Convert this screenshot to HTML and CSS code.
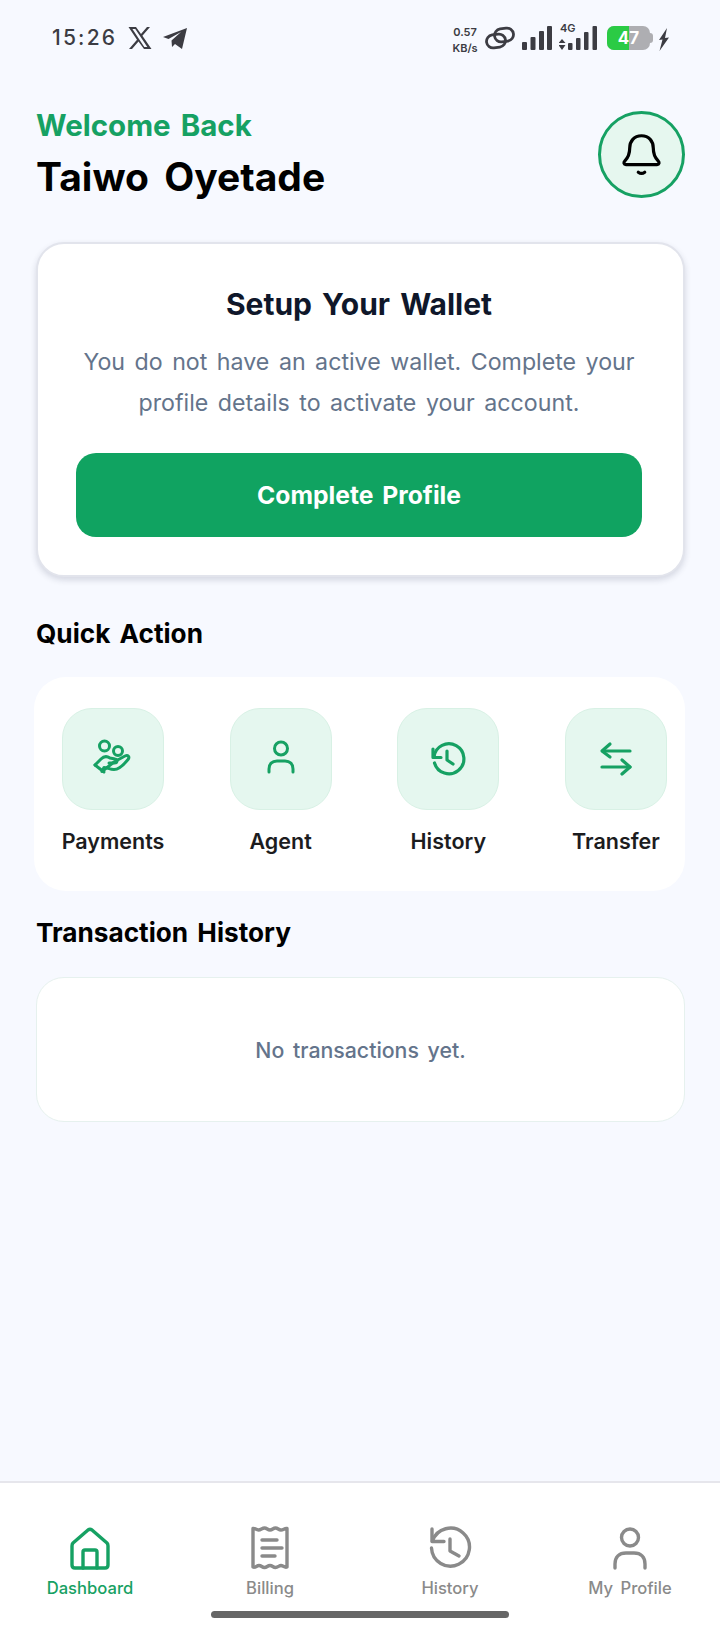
FILE: index.html
```html
<!DOCTYPE html>
<html lang="en">
<head>
    <meta charset="UTF-8">
    <meta name="viewport" content="width=device-width, initial-scale=1.0">
    <title>Dashboard</title>
    <link rel="stylesheet" href="styles.css">
</head>
<body>

<div class="screen">
    <!-- Status bar -->
    <div class="status-bar">
        <div class="status-left">
            <span class="time">15:26</span>
            <svg class="x-logo" width="24" height="24" viewBox="0 0 24 24"><path d="M.5 1h7.500l5 6.900L19 1h3l-7.600 8.700L23.500 23H16l-5.500-7.600L4 23H1l8-9.200z M4.400 3l11.900 18h3L7.300 3z" fill="#3c3c43" fill-rule="evenodd"/></svg>
            <svg class="tg-logo" width="26" height="24" viewBox="0 0 26 24"><path d="M25 2 20 23 13 18 10 21 9.500 14.500 19 6 6.500 13 1 11z" fill="#3c3c43"/></svg>
        </div>
        <div class="status-right">
            <div class="net-speed"><span>0.57</span><span>KB/s</span></div>
            <svg class="link-icon" width="30" height="24" viewBox="0 0 30 24" fill="none" stroke="#3c3c43" stroke-width="2.800"><rect x="1.500" y="8.500" width="19" height="13" rx="6.500" transform="rotate(-8 11 15)"/><rect x="9.500" y="2.500" width="19" height="13" rx="6.500" transform="rotate(-8 19 9)"/></svg>
            <svg class="signal" width="30" height="24" viewBox="0 0 30 24" fill="#3c3c43"><rect x="0" y="16" width="5" height="8" rx="1"/><rect x="8.500" y="11" width="5" height="13" rx="1"/><rect x="17" y="5" width="5" height="19" rx="1"/><rect x="25" y="0" width="5" height="24" rx="1"/></svg>
            <div class="signal-4g">
                <span class="tag-4g">4G</span>
                <svg width="39" height="24" viewBox="0 0 39 24" fill="#3c3c43"><path d="M3 13l3.500 4h-7zM3 24l-3.500-5h7z"/><rect x="9" y="17" width="4.500" height="7" rx="1"/><rect x="17" y="12" width="4.500" height="12" rx="1"/><rect x="25" y="6" width="4.500" height="18" rx="1"/><rect x="33.500" y="0" width="4.500" height="24" rx="1"/></svg>
            </div>
            <div class="battery">
                <div class="battery-body">
                    <div class="battery-level"></div>
                    <span class="battery-text">47</span>
                </div>
                <div class="battery-cap"></div>
            </div>
            <svg class="bolt" width="12" height="23" viewBox="0 0 12 23"><path d="M9 0 1 12l3.500-.5L1.500 23 11 9.500l-4 .5z" fill="#3c3c43"/></svg>
        </div>
    </div>

    <main class="content">
        <!-- Greeting -->
        <div class="greeting">
            <div>
                <div class="welcome">Welcome Back</div>
                <div class="user-name">Taiwo Oyetade</div>
            </div>
            <div class="bell-button">
                <svg width="45" height="45" viewBox="0 0 42 42" fill="none" stroke="#000" stroke-width="3" stroke-linecap="round" stroke-linejoin="round"><path d="M21 3.500c-7 0-11 5-11 11.500 0 5-1.500 9-4.500 12-1.500 1.500-1 3.500 1 3.500h29c2 0 2.500-2 1-3.500-3-3-4.500-7-4.500-12C32 8.500 28 3.500 21 3.500z"/><path d="M18 37.500c2 1.500 4 1.500 6 0"/></svg>
            </div>
        </div>

        <!-- Wallet setup -->
        <section class="wallet-card">
            <h2 class="wallet-title">Setup Your Wallet</h2>
            <p class="wallet-text">You do not have an active wallet. Complete your profile details to activate your account.</p>
            <div class="cta">Complete Profile</div>
        </section>

        <h3 class="section-title quick-title">Quick Action</h3>
        <section class="actions-card">
            <div class="action">
                <div class="action-icon">
                    <svg width="42" height="42" viewBox="0 0 42 42" fill="none" stroke="#16a163" stroke-width="3" stroke-linecap="round" stroke-linejoin="round"><circle cx="12.500" cy="8" r="5"/><circle cx="26" cy="13" r="4.500"/><path d="M3 27l6-6c3-3 6-3 9-1l5 1c3 .5 2.500 4-.5 4H17"/><path d="M22 24l11-6c3-1.500 5 1 3 3.500-4 5-9 10-14 10-4 0-7-2-10-2l-2 4z"/><path d="M3 27l9 7"/></svg>
                </div>
                <span class="action-label">Payments</span>
            </div>
            <div class="action">
                <div class="action-icon">
                    <svg width="42" height="42" viewBox="0 0 42 42" fill="none" stroke="#16a163" stroke-width="3" stroke-linecap="round" stroke-linejoin="round"><circle cx="21" cy="10.500" r="6.500"/><path d="M9 34v-3c0-5 3-8 8-8h8c5 0 8 3 8 8v3"/></svg>
                </div>
                <span class="action-label">Agent</span>
            </div>
            <div class="action">
                <div class="action-icon">
                    <svg width="42" height="42" viewBox="0 0 42 42" fill="none" stroke="#16a163" stroke-width="3.200" stroke-linecap="round" stroke-linejoin="round"><path d="M7 19A15 15 0 1 1 7.500 25"/><path d="M6 11v8.500h8"/><path d="M20 13v9l6 4"/></svg>
                </div>
                <span class="action-label">History</span>
            </div>
            <div class="action">
                <div class="action-icon">
                    <svg width="42" height="42" viewBox="0 0 42 42" fill="none" stroke="#16a163" stroke-width="3.200" stroke-linecap="round" stroke-linejoin="round"><path d="M35 13H8"/><path d="M15 6l-8 7 8 6"/><path d="M7 29h28"/><path d="M27 22l8 7-8 7"/></svg>
                </div>
                <span class="action-label">Transfer</span>
            </div>
        </section>

        <h3 class="section-title tx-title">Transaction History</h3>
        <section class="tx-card">No transactions yet.</section>
    </main>

    <!-- Bottom nav -->
    <nav class="bottom-nav">
        <div class="nav-items">
            <div class="nav-item active">
                <svg width="44" height="44" viewBox="0 0 44 44" fill="none" stroke="#16a163" stroke-width="3.400" stroke-linecap="round" stroke-linejoin="round"><path d="M5 17 20 4c1.500-1 2.500-1 4 0l15 13c.8.800 1 1.500 1 3v19c0 2-1 3-3 3H7c-2 0-3-1-3-3V20c0-1.500.2-2.200 1-3z"/><path d="M15 42V26c0-1.500.5-2 2-2h10c1.500 0 2 .500 2 2v16"/></svg>
                <span>Dashboard</span>
            </div>
            <div class="nav-item">
                <svg width="44" height="44" viewBox="0 0 44 44" fill="none" stroke="#8a8a8a" stroke-width="3.400" stroke-linecap="round" stroke-linejoin="round"><path d="M5 2.500c2-.5 3 1.500 5.500 1.500S14 2 16.500 2s3 2 5.500 2 3-2 5.500-2 3 2 5.500 2 3.500-2 6-1.500V41c-2.500 1-4-1.500-6-1.500s-3 2-5.500 2-3-2-5.500-2-3 2-5.500 2-3-2-5.500-2S7.500 42 5 41z"/><path d="M14 14h15M14 22h20M14 30h13"/></svg>
                <span>Billing</span>
            </div>
            <div class="nav-item">
                <svg width="44" height="44" viewBox="0 0 44 44" fill="none" stroke="#8a8a8a" stroke-width="3.400" stroke-linecap="round" stroke-linejoin="round"><path d="M4.500 15A19 19 0 1 1 3.500 22"/><path d="M4 3v12.500h12"/><path d="M22 13v12l9 5"/></svg>
                <span>History</span>
            </div>
            <div class="nav-item">
                <svg width="44" height="44" viewBox="0 0 44 44" fill="none" stroke="#8a8a8a" stroke-width="3.400" stroke-linecap="round" stroke-linejoin="round"><circle cx="22" cy="11.500" r="8.500"/><path d="M7 42v-4c0-7 4-11 11-11h8c7 0 11 4 11 11v4"/></svg>
                <span>My Profile</span>
            </div>
        </div>
        <div class="home-bar"></div>
    </nav>
</div>

</body>
</html>
```

FILE: styles.css
```css
/* Basic Reset */
* {
    margin: 0;
    padding: 0;
    box-sizing: border-box;
}
body {
    font-family: Inter, "Liberation Sans", sans-serif;
    background: #f7f9ff;
    color: #000;
    word-spacing: 3px;
}
.screen {
    width: 720px;
    height: 1640px;
    display: flex;
    flex-direction: column;
    overflow: hidden;
}

/* Status bar */
.status-bar {
    height: 76px;
    flex-shrink: 0;
    display: flex;
    justify-content: space-between;
    padding: 26px 50px 0 52px;
    color: #3c3c43;
}
.status-left {
    display: flex;
    align-items: flex-start;
}
.time {
    font-size: 21px;
    font-weight: 500;
    letter-spacing: 2.2px;
    line-height: 24px;
}
.x-logo {
    margin-left: 11px;
}
.tg-logo {
    margin-left: 10px;
}
.status-right {
    display: flex;
    align-items: flex-start;
}
.net-speed {
    display: flex;
    flex-direction: column;
    align-items: center;
    font-size: 11px;
    font-weight: 600;
    line-height: 16px;
    width: 28px;
    margin-top: -2px;
}
.link-icon {
    margin-left: 6px;
}
.signal {
    margin-left: 7px;
}
.signal-4g {
    position: relative;
    margin-left: 7px;
}
.tag-4g {
    position: absolute;
    left: 1px;
    top: -3px;
    font-size: 11px;
    font-weight: 600;
    line-height: 11px;
}
.battery {
    display: flex;
    align-items: center;
    margin-left: 9px;
    height: 24px;
}
.battery-body {
    position: relative;
    width: 43px;
    height: 24px;
    border-radius: 7px;
    background: #aeaeb2;
    overflow: hidden;
}
.battery-level {
    width: 51%;
    height: 100%;
    background: #2bcb45;
}
.battery-text {
    position: absolute;
    inset: 0;
    text-align: center;
    color: #fff;
    font-size: 17px;
    font-weight: 700;
    line-height: 24px;
}
.battery-cap {
    width: 3px;
    height: 10px;
    background: #aeaeb2;
    border-radius: 0 3px 3px 0;
}
.bolt {
    margin: 2px 0 0 5px;
}

/* Main content */
.content {
    flex: 1;
    padding: 0 35px 0 36px;
}
.greeting {
    display: flex;
    justify-content: space-between;
    align-items: flex-start;
    padding-top: 30px;
    height: 166px;
}
.welcome {
    color: #16a163;
    font-size: 29.500px;
    font-weight: 700;
    line-height: 36px;
    margin-top: 1px;
}
.user-name {
    font-size: 39px;
    font-weight: 700;
    line-height: 44px;
    margin-top: 12px;
    word-spacing: 6px;
}
.bell-button {
    width: 87px;
    height: 87px;
    margin-top: 5px;
    border: 3px solid #16a163;
    border-radius: 50%;
    background: #e6f7ef;
    display: flex;
    align-items: center;
    justify-content: center;
}

/* Wallet card */
.wallet-card {
    height: 335px;
    background: #fff;
    border: 2px solid #e2e4ec;
    border-radius: 28px;
    box-shadow: 0 3px 6px rgba(30, 40, 70, 0.16);
    padding: 41px 41px 0 38px;
    text-align: center;
}
.wallet-title {
    color: #0f172a;
    font-size: 30px;
    font-weight: 700;
    line-height: 38px;
}
.wallet-text {
    color: #64748b;
    font-size: 23.200px;
    line-height: 41px;
    margin-top: 19px;
}
.cta {
    height: 84px;
    margin-top: 29px;
    background: #10a361;
    border-radius: 20px;
    color: #fff;
    font-size: 24.700px;
    font-weight: 700;
    display: flex;
    align-items: center;
    justify-content: center;
}

/* Quick action */
.section-title {
    font-size: 26.200px;
    font-weight: 700;
    line-height: 36px;
}
.quick-title {
    margin-top: 39px;
}
.actions-card {
    height: 214px;
    margin: 25px 0 0 -2px;
    background: #fff;
    border-radius: 32px;
    padding: 31px 18px 0 28px;
    display: flex;
    justify-content: space-between;
}
.action {
    width: 102px;
    display: flex;
    flex-direction: column;
    align-items: center;
}
.action-icon {
    width: 102px;
    height: 102px;
    border: 1px solid #d8f1e5;
    border-radius: 30px;
    background: #e5f7ef;
    display: flex;
    align-items: center;
    justify-content: center;
}
.action-label {
    margin-top: 17px;
    font-size: 21.500px;
    font-weight: 600;
    line-height: 28px;
    color: #1c1c1e;
    white-space: nowrap;
}
.tx-title {
    margin-top: 24px;
}
.tx-card {
    height: 145px;
    margin-top: 26px;
    background: #fff;
    border: 1px solid #e6f1ee;
    border-radius: 28px;
    color: #64748b;
    font-size: 21.300px;
    font-weight: 500;
    display: flex;
    align-items: center;
    justify-content: center;
}

/* Bottom nav */
.bottom-nav {
    height: 159px;
    flex-shrink: 0;
    background: #fff;
    border-top: 2px solid #e6e6ec;
    display: flex;
    flex-direction: column;
    align-items: center;
}
.nav-items {
    width: 100%;
    display: grid;
    grid-template-columns: repeat(4, 1fr);
    padding-top: 43px;
}
.nav-item {
    display: flex;
    flex-direction: column;
    align-items: center;
    color: #8a8a8a;
    font-size: 16.600px;
    font-weight: 500;
    line-height: 22px;
    gap: 7px;
}
.nav-item.active {
    color: #16a163;
}
.home-bar {
    width: 298px;
    height: 7px;
    margin-top: 12px;
    border-radius: 4px;
    background: #666;
}
```
